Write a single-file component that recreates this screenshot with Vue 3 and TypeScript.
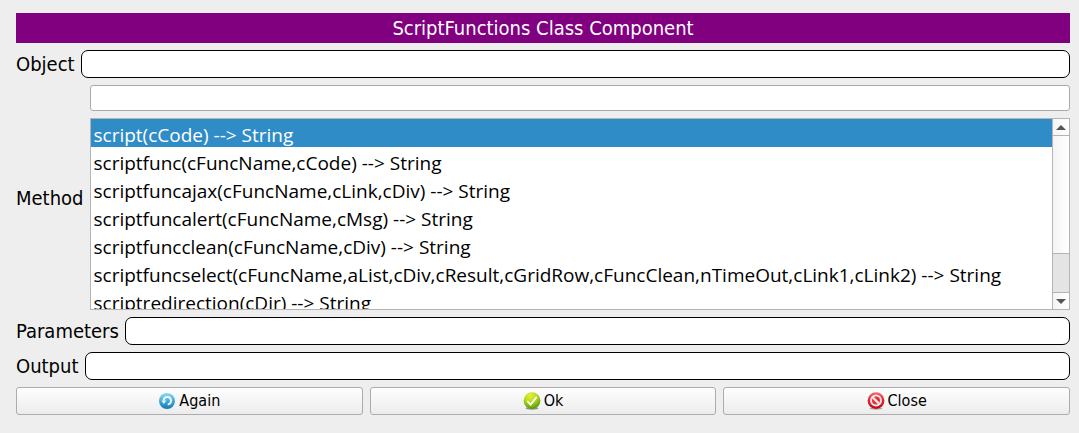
<script setup lang="ts">
import { computed, ref } from 'vue'

const methods: string[] = [
  'script(cCode) --> String',
  'scriptfunc(cFuncName,cCode) --> String',
  'scriptfuncajax(cFuncName,cLink,cDiv) --> String',
  'scriptfuncalert(cFuncName,cMsg) --> String',
  'scriptfuncclean(cFuncName,cDiv) --> String',
  'scriptfuncselect(cFuncName,aList,cDiv,cResult,cGridRow,cFuncClean,nTimeOut,cLink1,cLink2) --> String',
  'scriptredirection(cDir) --> String',
]

const objectName = ref('')
const search = ref('')
const parameters = ref('')
const output = ref('')
const selected = ref(0)
const list = ref<HTMLElement | null>(null)
const scrolled = ref(0)

const thumbOffset = computed(() => `${Math.round(scrolled.value * 38)}px`)

function scrollRows(rows: number) {
  list.value?.scrollBy({ top: rows * 28 })
}

function onScroll() {
  const el = list.value
  if (!el) return
  scrolled.value = el.scrollTop / Math.max(1, el.scrollHeight - el.clientHeight)
}

function reset() {
  objectName.value = search.value = parameters.value = output.value = ''
  selected.value = 0
}
</script>

<template>
  <main class="window">
    <h1 class="title">ScriptFunctions Class Component</h1>

    <div class="row">
      <label for="object">Object</label>
      <input id="object" v-model="objectName" class="field" type="text" />
    </div>

    <div class="row">
      <label for="search">Method</label>
      <div class="method">
        <input id="search" v-model="search" class="search" type="text" />
        <div class="listbox">
          <ul ref="list" class="items" role="listbox" aria-label="Method" tabindex="0" @scroll="onScroll">
            <li
              v-for="(method, i) in methods"
              :key="method"
              class="item"
              :class="{ selected: i === selected }"
              role="option"
              :aria-selected="i === selected"
              @click="selected = i"
            >{{ method }}</li>
          </ul>
          <div class="scrollbar">
            <button class="arrow up" type="button" aria-label="Scroll up" @click="scrollRows(-1)">
              <svg width="10" height="5" viewBox="0 0 10 5"><path d="M0 5 5 0l5 5z" fill="#555" /></svg>
            </button>
            <div class="track"><div class="thumb" :style="{ marginTop: thumbOffset }"></div></div>
            <button class="arrow down" type="button" aria-label="Scroll down" @click="scrollRows(1)">
              <svg width="10" height="5" viewBox="0 0 10 5"><path d="M0 0h10L5 5z" fill="#555" /></svg>
            </button>
          </div>
        </div>
      </div>
    </div>

    <div class="row">
      <label for="parameters">Parameters</label>
      <input id="parameters" v-model="parameters" class="field" type="text" />
    </div>

    <div class="row">
      <label for="output">Output</label>
      <input id="output" v-model="output" class="field" type="text" />
    </div>

    <div class="actions">
      <button class="action" type="button" @click="reset">
        <svg width="18" height="18" viewBox="0 0 18 18">
          <defs>
            <linearGradient id="blue" x1="0" y1="0" x2="0" y2="1">
              <stop offset="0" stop-color="#8ed8f0" />
              <stop offset=".5" stop-color="#45a9d8" />
              <stop offset="1" stop-color="#1478b8" />
            </linearGradient>
          </defs>
          <circle cx="9" cy="9" r="8" fill="url(#blue)" />
          <path d="M5.6 8.6A3.7 3.7 0 1 1 9.8 12.4" fill="none" stroke="#e8f6fc" stroke-width="2" />
          <path d="M3.4 8.4h5L5.8 12z" fill="#e8f6fc" />
        </svg>
        Again
      </button>
      <button class="action" type="button">
        <svg width="18" height="18" viewBox="0 0 18 18">
          <defs>
            <radialGradient id="green" cx=".4" cy=".2" r=".8">
              <stop offset="0" stop-color="#e6ee3c" />
              <stop offset=".5" stop-color="#b5d81c" />
              <stop offset="1" stop-color="#57980c" />
            </radialGradient>
          </defs>
          <ellipse cx="9" cy="16.3" rx="6.5" ry="1.4" fill="#8b9581" />
          <circle cx="9" cy="8.6" r="8.4" fill="url(#green)" />
          <path d="m4.2 9 3.4 3.6 6.2-7.8" fill="none" stroke="#fff" stroke-width="1.7" />
        </svg>
        Ok
      </button>
      <button class="action" type="button">
        <svg width="18" height="18" viewBox="0 0 18 18">
          <defs>
            <linearGradient id="red" x1="0" y1="0" x2="0" y2="1">
              <stop offset="0" stop-color="#f26a70" />
              <stop offset=".5" stop-color="#e2202c" />
              <stop offset="1" stop-color="#b80d18" />
            </linearGradient>
          </defs>
          <ellipse cx="9" cy="16.4" rx="6.5" ry="1.3" fill="#b3a5a5" />
          <circle cx="9" cy="8.6" r="8.4" fill="url(#red)" />
          <circle cx="9" cy="8.6" r="5" fill="#e2303a" stroke="#f6e4e5" stroke-width="2" />
          <path d="m5.5 5.1 7 7" stroke="#f6e4e5" stroke-width="2.2" />
        </svg>
        Close
      </button>
    </div>
  </main>
</template>

<style>
body {
  margin: 0;
  background: #eee;
}
</style>

<style scoped>
.window {
  display: flex;
  flex-direction: column;
  gap: 7px;
  padding: 13px 9px 18px 16px;
  color: #000;
  font: 20px/28px Tahoma, "DejaVu Sans Condensed", sans-serif;
}

.title {
  margin: 0;
  background: #800080;
  color: #fff;
  font-size: 20px;
  font-weight: 400;
  line-height: 30px;
  text-align: center;
}

.row {
  display: flex;
  align-items: center;
  gap: 6px;
}

.field,
.search {
  box-sizing: border-box;
  flex: 1;
  min-width: 0;
  height: 28px;
  padding: 0 6px;
  border: 1px solid #000;
  border-radius: 7px;
  background: #fff;
  font: inherit;
  outline: none;
}

.search {
  flex: none;
  width: 100%;
  height: 26px;
  border-color: #aaa;
  border-radius: 3px;
}

.method {
  display: flex;
  flex: 1;
  flex-direction: column;
  gap: 7px;
  min-width: 0;
}

.listbox {
  display: flex;
  height: 190px;
  border: 1px solid #b4b4b4;
  background: #fff;
}

.items {
  flex: 1;
  min-width: 0;
  margin: 0;
  padding: 0;
  overflow: auto;
  list-style: none;
  outline: none;
  scrollbar-width: none;
}

.item {
  height: 28px;
  padding: 0 3px;
  font: 19px/32px "Segoe UI", "Open Sans", sans-serif;
  white-space: nowrap;
  cursor: default;
}

.selected {
  background: #308cc6;
  color: #fff;
}

.scrollbar {
  display: flex;
  flex-direction: column;
  width: 16px;
  border-left: 1px solid #b4b4b4;
}

.arrow {
  display: flex;
  align-items: center;
  justify-content: center;
  box-sizing: border-box;
  height: 17px;
  padding: 0;
  border: 0;
  background: linear-gradient(90deg, #f4f4f4, #fff);
}

.up {
  border-bottom: 1px solid #b4b4b4;
}

.down {
  border-top: 1px solid #b4b4b4;
}

.track {
  flex: 1;
  overflow: hidden;
  background: #e4e4e4;
}

.thumb {
  height: 117px;
  border-bottom: 1px solid #b4b4b4;
  background: linear-gradient(90deg, #f4f4f4, #fff);
}

.actions {
  display: grid;
  grid-template-columns: repeat(3, 1fr);
  gap: 7px;
}

.action {
  display: flex;
  align-items: center;
  justify-content: center;
  gap: 3px;
  height: 28px;
  padding: 0;
  border: 1px solid #acacac;
  border-radius: 3px;
  background: linear-gradient(#fefefe, #ececec);
  color: #000;
  font: 16px/26px Tahoma, "DejaVu Sans Condensed", sans-serif;
}
</style>
